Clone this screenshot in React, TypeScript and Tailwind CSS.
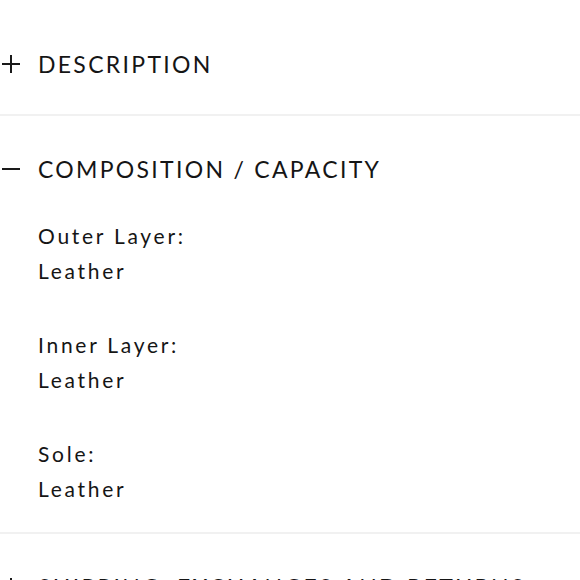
import { useState } from "react";

const font = { fontFamily: '"Lato", "Liberation Sans", sans-serif' };

function PlusIcon() {
  return (
    <svg width="18" height="18" viewBox="0 0 18 18" className="shrink-0">
      <path d="M9 0v18M0 9h18" stroke="#1a1a1a" strokeWidth="2" />
    </svg>
  );
}

function MinusIcon() {
  return (
    <svg width="18" height="18" viewBox="0 0 18 18" className="shrink-0">
      <path d="M0 9h18" stroke="#1a1a1a" strokeWidth="2" />
    </svg>
  );
}

const composition = [
  { label: "Outer Layer:", value: "Leather" },
  { label: "Inner Layer:", value: "Leather" },
  { label: "Sole:", value: "Leather" },
];

function SectionHeader({ title, open }: { title: string; open: boolean }) {
  return (
    <div className="flex items-center h-[40px] pl-[2px]">
      {open ? <MinusIcon /> : <PlusIcon />}
      <span className="ml-[18px] text-[23px] leading-[40px] tracking-[0.1em] text-[#151515] uppercase whitespace-nowrap">
        {title}
      </span>
    </div>
  );
}

export default function App() {
  const [open] = useState("composition");

  return (
    <div className="w-[580px] h-[580px] overflow-hidden bg-white" style={font}>
      <section className="pt-[44px] pb-[30px] border-b-2 border-[#f1f1f1]">
        <SectionHeader title="Description" open={open === "description"} />
      </section>

      <section className="pt-[33px] pb-[26px] border-b-2 border-[#f1f1f1]">
        <SectionHeader title="Composition / Capacity" open={open === "composition"} />
        <div className="mt-[29px] pl-[38px] flex flex-col gap-[39px] text-[21px] leading-[35px] tracking-[0.13em] text-[#151515]">
          {composition.map((item) => (
            <div key={item.label}>
              <p>{item.label}</p>
              <p>{item.value}</p>
            </div>
          ))}
        </div>
      </section>

      <section className="pt-[33px] pb-[29px]">
        <SectionHeader title="Shipping, exchanges and returns" open={false} />
      </section>
    </div>
  );
}
